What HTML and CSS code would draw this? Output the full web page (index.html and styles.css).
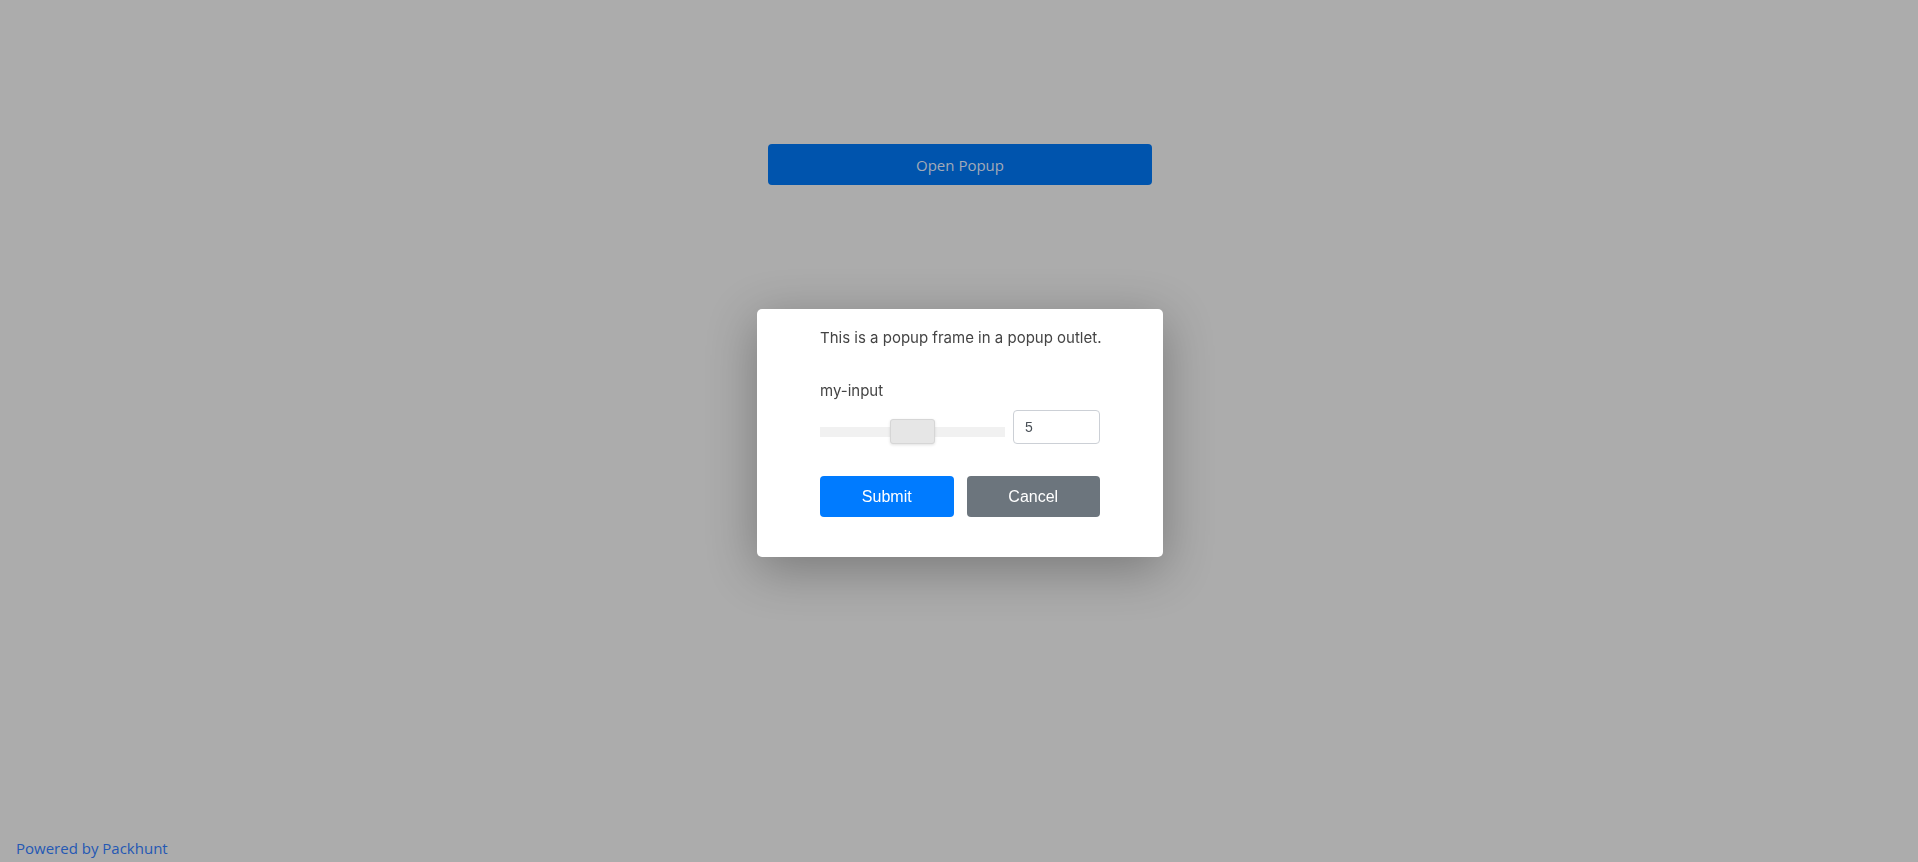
FILE: index.html
```html
<!DOCTYPE html>
<html lang="en">
<head>
  <meta charset="UTF-8" />
  <meta name="viewport" content="width=device-width, initial-scale=1.0"/>
  <title>Popup Outlet</title>
  <link rel="stylesheet" href="styles.css">
</head>
<body>
  <div class="page">
    <button class="btn-open">Open Popup</button>
  </div>
  <footer class="powered">Powered by Packhunt</footer>

  <div class="outlet">
    <div class="popup">
      <p class="popup-text">This is a popup frame in a popup outlet.</p>

      <label class="field-label" for="myInput">my-input</label>
      <div class="slider-row">
        <input type="range" class="slider" min="0" max="10" value="5" />
        <input type="number" id="myInput" class="number" value="5" />
      </div>

      <div class="actions">
        <button class="btn btn-submit">Submit</button>
        <button class="btn btn-cancel">Cancel</button>
      </div>
    </div>
  </div>
</body>
</html>
```

FILE: styles.css
```css
:root {
  --overlay:  #acacac;
  --blue-dim: #0054ad;
  --blue:     #007bff;
  --gray:     #6c757d;
  --text:     #444;
  --white:    #fff;
}
* { box-sizing: border-box; margin: 0; padding: 0; }
body {
  min-height: 100vh;
  background: var(--overlay);
  font-family: 'Open Sans', sans-serif;
  display: flex;
  flex-direction: column;
}
.page {
  flex: 1;
  display: flex;
  justify-content: center;
  padding: 144px 0 0 2px;
}
.btn-open {
  width: 384px;
  height: 41px;
  border: none;
  border-radius: 4px;
  background: var(--blue-dim);
  color: #a2aab7;
  font-family: 'Open Sans', sans-serif;
  font-size: 15px;
}
.powered {
  padding: 0 0 4px 16px;
  color: #2458b4;
  font-size: 15px;
  line-height: 20px;
}

/* popup outlet */
.outlet {
  position: fixed;
  inset: 0;
  display: flex;
  align-items: center;
  justify-content: center;
  padding: 4px 0 0 2px;
}
.popup {
  width: 406px;
  padding: 19px 63px 40px;
  background: var(--white);
  border-radius: 5px;
  box-shadow: 0 12px 50px rgba(0,0,0,0.3);
  font-family: 'Inter', sans-serif;
  color: var(--text);
}
.popup-text {
  font-size: 15px;
  line-height: 20px;
  white-space: nowrap;
}
.field-label {
  display: block;
  margin-top: 33px;
  font-size: 15px;
  line-height: 20px;
}
.slider-row {
  display: flex;
  align-items: flex-end;
  gap: 8px;
  margin-top: 9px;
}
.slider {
  -webkit-appearance: none;
  appearance: none;
  flex: 1;
  height: 25px;
  background: transparent;
}
.slider::-webkit-slider-runnable-track {
  height: 10px;
  background: #f1f1f1;
}
.slider::-webkit-slider-thumb {
  -webkit-appearance: none;
  width: 45px;
  height: 25px;
  margin-top: -7.5px;
  background: #e6e6e6;
  border: 1px solid #d6d6d6;
  border-radius: 3px;
  box-shadow: 0 1px 3px rgba(0,0,0,0.12);
}
.number {
  width: 87px;
  height: 34px;
  padding: 0 11px;
  border: 1px solid #ccd0d6;
  border-radius: 4px;
  font-family: 'Liberation Sans', sans-serif;
  font-size: 14px;
  color: #495057;
  -moz-appearance: textfield;
}
.number::-webkit-inner-spin-button { -webkit-appearance: none; }
.actions {
  display: flex;
  gap: 13px;
  margin-top: 32px;
}
.btn {
  flex: 1;
  height: 41px;
  border: none;
  border-radius: 4px;
  color: var(--white);
  font-family: 'Liberation Sans', sans-serif;
  font-size: 16px;
}
.btn-submit { background: var(--blue); }
.btn-cancel { background: var(--gray); }
```
